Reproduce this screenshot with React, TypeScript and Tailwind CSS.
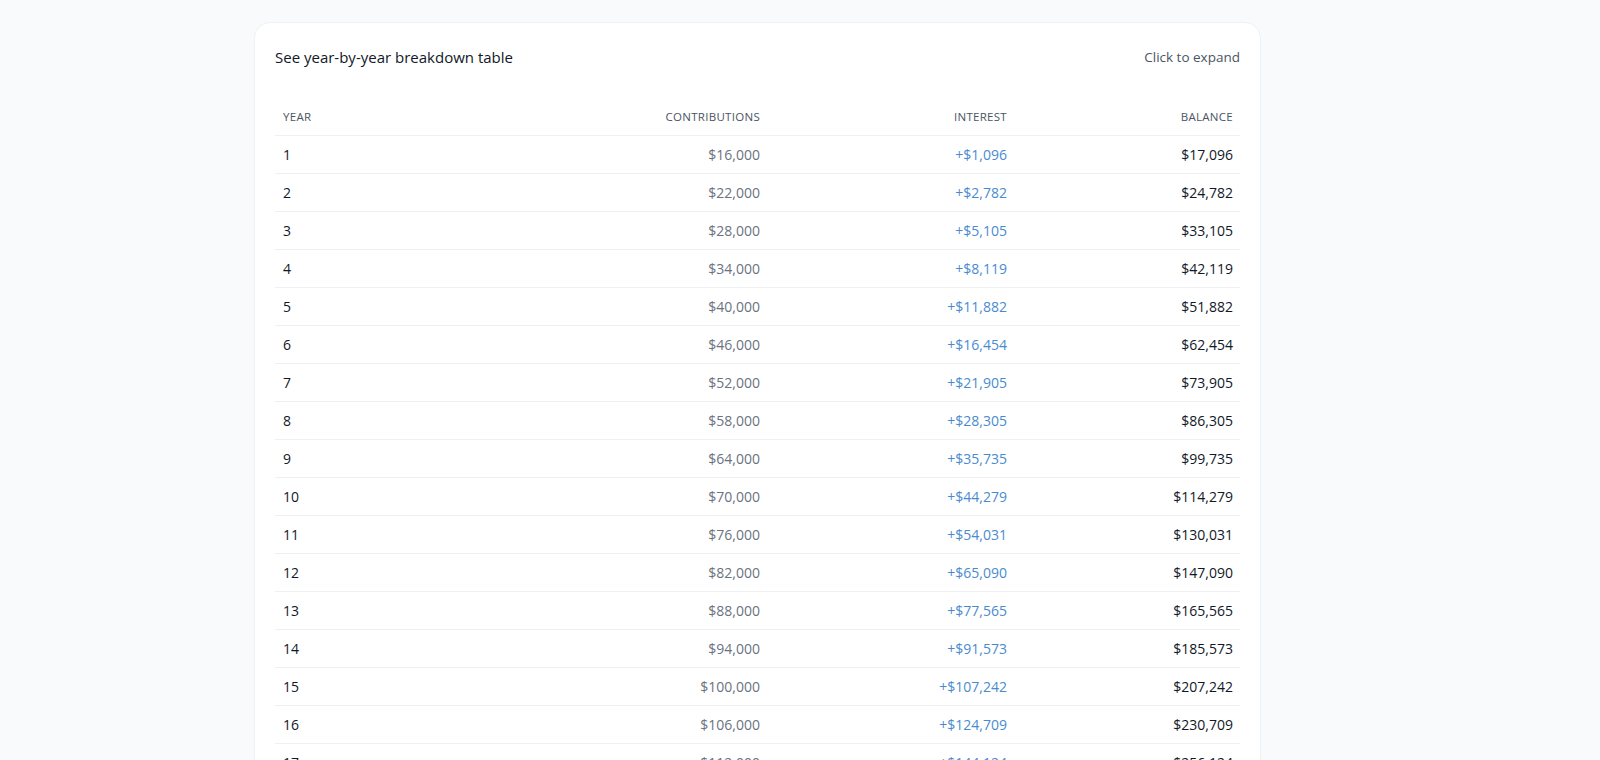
const rows = [
  [1, "$16,000", "+$1,096", "$17,096"],
  [2, "$22,000", "+$2,782", "$24,782"],
  [3, "$28,000", "+$5,105", "$33,105"],
  [4, "$34,000", "+$8,119", "$42,119"],
  [5, "$40,000", "+$11,882", "$51,882"],
  [6, "$46,000", "+$16,454", "$62,454"],
  [7, "$52,000", "+$21,905", "$73,905"],
  [8, "$58,000", "+$28,305", "$86,305"],
  [9, "$64,000", "+$35,735", "$99,735"],
  [10, "$70,000", "+$44,279", "$114,279"],
  [11, "$76,000", "+$54,031", "$130,031"],
  [12, "$82,000", "+$65,090", "$147,090"],
  [13, "$88,000", "+$77,565", "$165,565"],
  [14, "$94,000", "+$91,573", "$185,573"],
  [15, "$100,000", "+$107,242", "$207,242"],
  [16, "$106,000", "+$124,709", "$230,709"],
  [17, "$112,000", "+$144,124", "$256,124"],
];

export default function App() {
  return (
    <div className="min-h-screen bg-[#f8fafc] pt-[22px]" style={{ fontFamily: '"Open Sans", "Noto Sans", sans-serif' }}>
      <div className="ml-[254px] w-[1007px] bg-white rounded-2xl border border-[#eef1f5] px-5 pt-[24px]">
        <div className="flex justify-between items-center h-[20px]">
          <span className="text-[15px] text-[#111827]">See year-by-year breakdown table</span>
          <span className="text-[13.5px] text-[#4b5563]">Click to expand</span>
        </div>
        <div className="mt-[31px]">
          <div className="grid grid-cols-[245px_248px_247px_227px] h-[38px] items-center text-[11.5px] tracking-wide text-[#4b5563] border-b border-[#eef0f3]">
            <div className="pl-2">YEAR</div>
            <div className="text-right pr-2">CONTRIBUTIONS</div>
            <div className="text-right pr-2">INTEREST</div>
            <div className="text-right pr-[9px]">BALANCE</div>
          </div>
          {rows.map((r) => (
            <div key={r[0]} className="grid grid-cols-[245px_248px_247px_227px] h-[38px] items-center text-[14px] border-b border-[#eef0f3]">
              <div className="pl-2 text-[#111827]">{r[0]}</div>
              <div className="text-right pr-2 text-[#6b7280]">{r[1]}</div>
              <div className="text-right pr-2 text-[#4a8bd0]">{r[2]}</div>
              <div className="text-right pr-[9px] text-[#111827]">{r[3]}</div>
            </div>
          ))}
        </div>
      </div>
    </div>
  );
}
